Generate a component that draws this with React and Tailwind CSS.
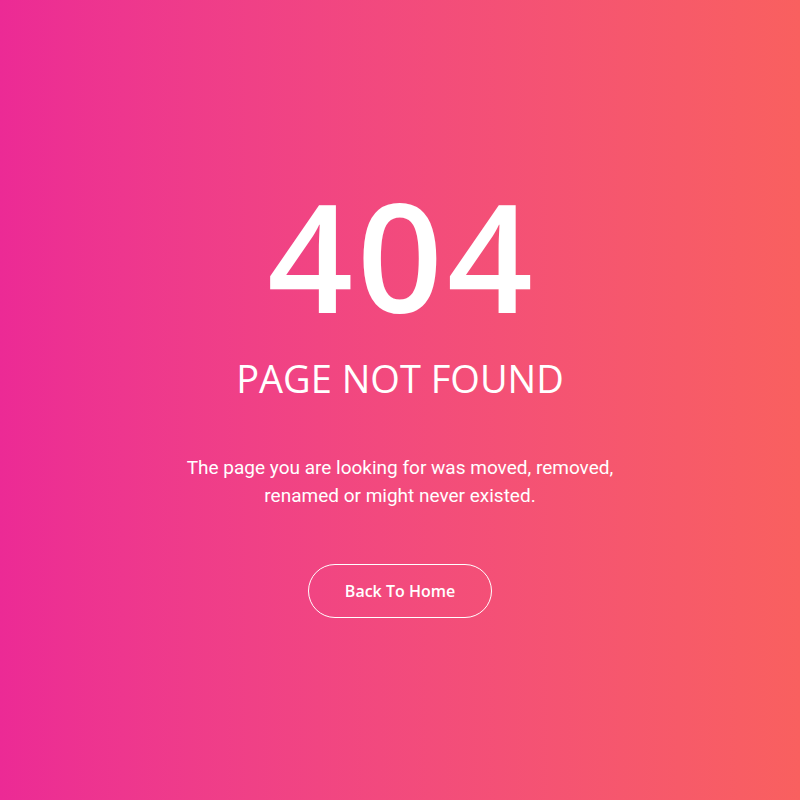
export default function App() {
  return (
    <div className="w-full min-h-screen h-[800px] bg-gradient-to-r from-[#ec2a95] to-[#f9605f] flex flex-col items-center text-white font-['Open_Sans',sans-serif]">
      <h1 className="mt-[180px] pl-[4px] text-[150px] font-semibold leading-[150px] tracking-[4px]">404</h1>
      <h2 className="mt-[24px] text-[38px] font-normal leading-[48px]">PAGE NOT FOUND</h2>
      <p className="mt-[52px] w-[450px] text-center text-[19px] leading-[28px] font-['Roboto',sans-serif]">
        The page you are looking for was moved, removed, renamed or might never existed.
      </p>
      <button className="mt-[54px] w-[184px] h-[54px] rounded-full border border-white text-[16px] font-semibold">
        Back To Home
      </button>
    </div>
  );
}
